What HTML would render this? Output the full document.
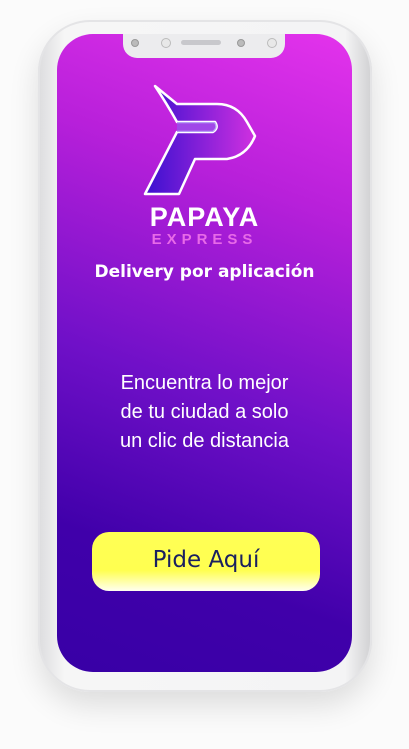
<!DOCTYPE html><html><head><meta charset="utf-8"><style>
body{margin:0;width:409px;height:749px;background:#fbfbfb;position:relative;overflow:hidden;font-family:"Liberation Sans",sans-serif}
.phone{position:absolute;left:38px;top:20px;width:334px;height:672px;border-radius:52px;background:linear-gradient(90deg,#dcdcde,#f6f6f6 8%,#f4f4f5 92%,#d0d0d2);box-shadow:0 14px 30px rgba(0,0,0,.12),inset 0 0 0 2px #e4e4e6}
.screen{position:absolute;left:57px;top:34px;width:295px;height:638px;border-radius:36px;background:linear-gradient(200deg,#e433ec 0%,#b820da 25%,#7010c8 55%,#4000aa 80%,#3800a6 100%);overflow:hidden}
.notch{position:absolute;left:66px;top:0;width:162px;height:24px;background:#ececee;border-radius:0 0 14px 14px}
.t{position:absolute;left:0;width:295px;text-align:center;color:#fff}
.btn{position:absolute;left:35px;top:498px;width:228px;height:59px;border-radius:17px;background:linear-gradient(180deg,#ffff55 0%,#ffff50 65%,#fffff0 100%);text-align:center;line-height:56px;font-size:23px;color:#1a2060;font-family:"DejaVu Sans",sans-serif}
</style></head><body>
<div class="phone"></div>
<div class="screen">
<div class="notch">
<div style="position:absolute;left:8px;top:5px;width:6px;height:6px;border-radius:50%;background:#bbb;border:1px solid #999"></div>
<div style="position:absolute;left:38px;top:4px;width:8px;height:8px;border-radius:50%;background:#e8e8e8;border:1px solid #bbb"></div>
<div style="position:absolute;left:58px;top:6px;width:40px;height:5px;border-radius:3px;background:#c8c8cc"></div>
<div style="position:absolute;left:114px;top:5px;width:6px;height:6px;border-radius:50%;background:#bbb;border:1px solid #999"></div>
<div style="position:absolute;left:144px;top:4px;width:8px;height:8px;border-radius:50%;background:#e8e8e8;border:1px solid #bbb"></div>
</div>
<svg style="position:absolute;left:80px;top:50px" width="140" height="115" viewBox="0 0 140 115">
<defs><linearGradient id="g" x1="0" y1="0" x2="1" y2="0"><stop offset="0" stop-color="#3a10d0"/><stop offset="1" stop-color="#d030e0"/></linearGradient></defs>
<path d="M18 2 L40 20 L80 20 Q100 20 110 38 L118 52 Q110 72 90 75 L58 75 L42 110 L8 110 L40 48 L76 48 Q82 44 78 38 L40 38 Q30 20 18 2Z" fill="url(#g)" stroke="#fff" stroke-width="2.5" stroke-linejoin="round"/>
<path d="M40 38 L78 38 Q82 44 76 48 L40 48Z" fill="#8a60f0" opacity=".6"/>
</svg>
<div class="t" style="top:168px;font-size:27px;font-weight:bold;letter-spacing:1px">PAPAYA</div>
<div class="t" style="top:197px;font-size:15px;color:#e86ae8;letter-spacing:5px;font-weight:bold">EXPRESS</div>
<div class="t" style="top:228px;font-size:17px;font-weight:bold;font-family:'DejaVu Sans',sans-serif">Delivery por aplicación</div>
<div class="t" style="top:335px;font-size:20px;line-height:29px;font-family:'Liberation Sans Narrow','Liberation Sans',sans-serif">Encuentra lo mejor<br>de tu ciudad a solo<br>un clic de distancia</div>
<div class="btn">Pide Aquí</div>
</div>
</body></html>
